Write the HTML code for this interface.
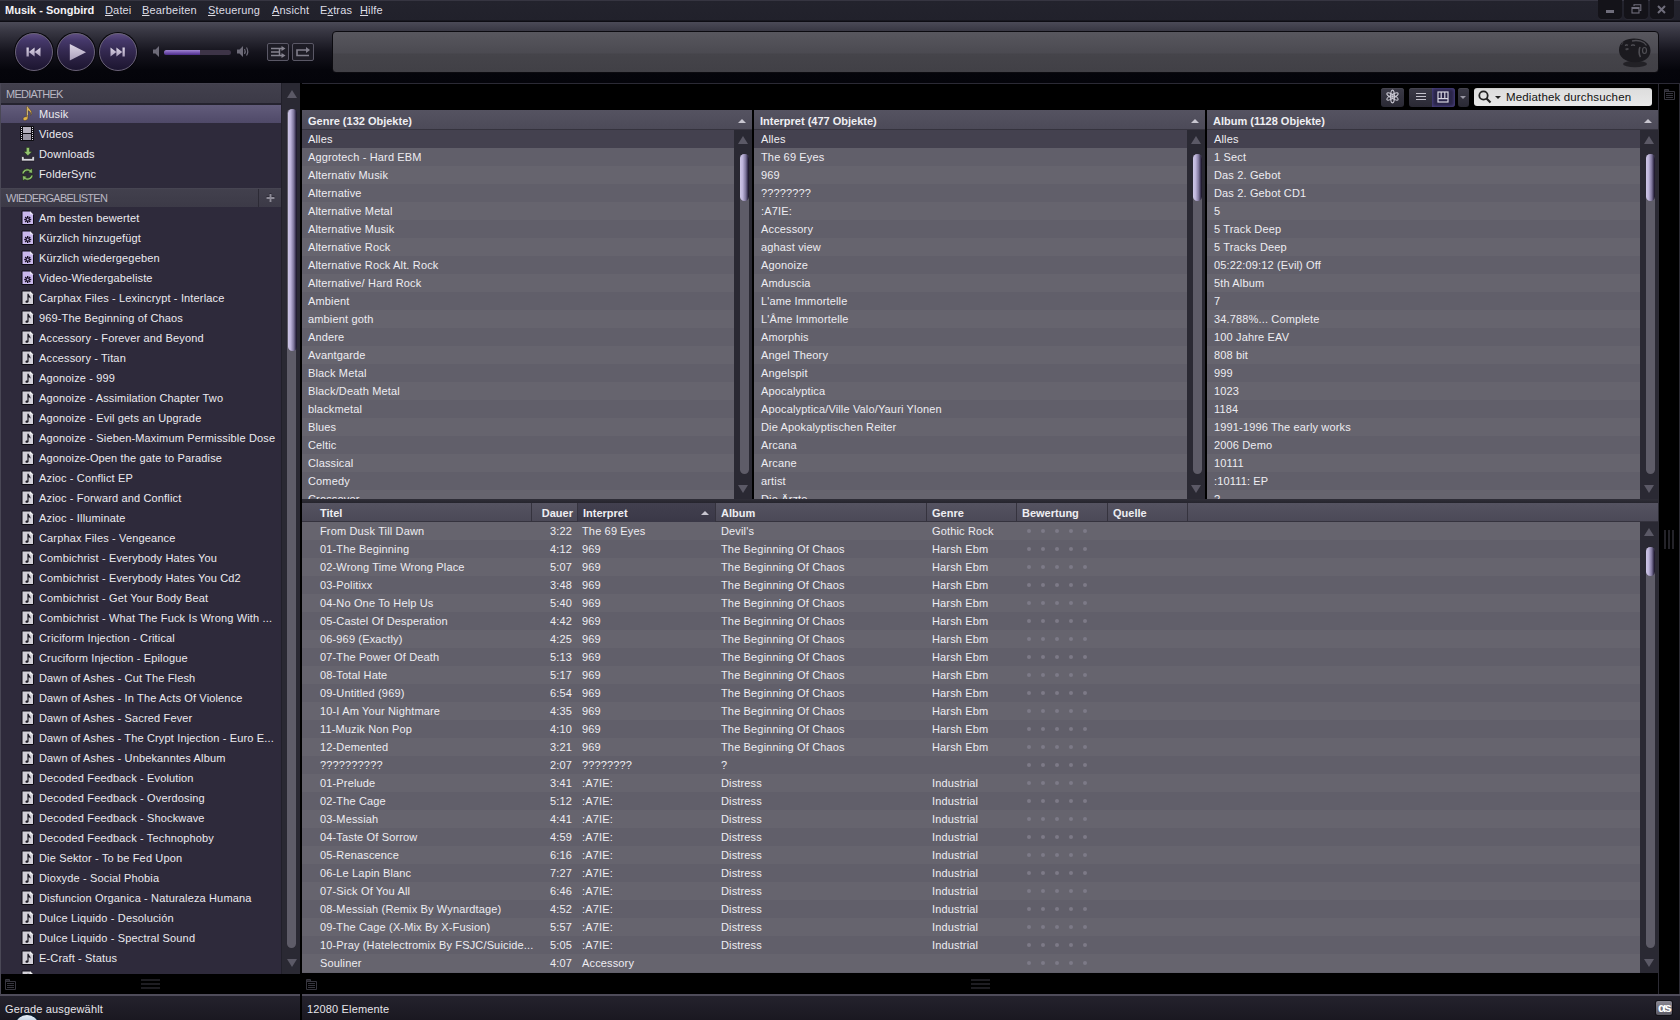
<!DOCTYPE html><html><head><meta charset="utf-8"><style>
*{box-sizing:border-box}
html,body{margin:0;padding:0}
body{width:1680px;height:1020px;overflow:hidden;background:#000;position:relative;font-family:"Liberation Sans",sans-serif;font-size:11px;letter-spacing:0.15px;color:#eeeef2}
.a{position:absolute}
.t{position:absolute;white-space:nowrap;line-height:14px}
.ic{position:absolute}
#title{left:0;top:0;width:1680px;height:22px;background:linear-gradient(#363541 0,#363541 1px,#23232d 1px,#21212b 20px,#0e0d14 21px)}
#toolbar{left:0;top:22px;width:1680px;height:61px;background:linear-gradient(#4b4a57 0,#3a3945 8px,#15141d 30px,#05050b 48px,#04040a 61px)}
.menu span{text-decoration:underline}
.btn{position:absolute;border-radius:50%;width:38px;height:38px;top:33px;background:linear-gradient(#5e4d82 0,#45386a 18%,#352a52 45%,#271e3e 75%,#1c1530 100%);border:1px solid #6a6279;box-shadow:0 0 0 1px #08070c}
#display{left:332px;top:31px;width:1327px;height:42px;border:1px solid #0c0b10;border-radius:4px;background:linear-gradient(#58575e 0,#4b4a51 21px,#45444a 22px,#414046 100%)}
#sidebar{left:0;top:83px;width:281px;height:891px;background:#2e2a3b;border-left:1px solid #3f3c4a;overflow:hidden}
.shdr{position:absolute;left:0;width:280px;height:20px;background:linear-gradient(#4b4957 0,#42404d 1px,#3c3a47 100%);color:#b9b7c3;font-size:11.5px}
.srow{position:absolute;left:0;width:280px;height:20px}
.srow .t{left:38px;top:4px;color:#ecebf0}
.vscroll{position:absolute;background:#2a2933;border-left:1px solid #21202a}
.arr{position:absolute;width:0;height:0;border-left:5px solid transparent;border-right:5px solid transparent}
.up{border-bottom:8px solid #5b5966}
.dn{border-top:8px solid #5b5966}
.groove{position:absolute;background:#5e5c68;border-radius:5px}
.thumb{position:absolute;border-radius:5px;background:linear-gradient(90deg,#cdc6e6 0,#bdb4da 30%,#7a7298 65%,#2e2844 88%,#17121f 100%)}
.pane{position:absolute;top:110px;height:389px;background:#5f5d69;overflow:hidden}
.phdr{position:absolute;left:0;top:0;height:20px;background:linear-gradient(#555361 0,#4c4a58 100%);border-bottom:1px solid #35333e;font-weight:bold;font-size:11px;letter-spacing:0}
.prow{position:absolute;left:0;height:18px}
.prow .t{top:2px;left:7px;color:#eeedf2}
.sortarr{position:absolute;width:0;height:0;border-left:4px solid transparent;border-right:4px solid transparent;border-bottom:4px solid #c8c6d0}
#tl{left:302px;top:503px;width:1356px;height:470px;background:#62606b;overflow:hidden}
.th{position:absolute;top:0;height:19px;border-right:1px solid #35333e;font-weight:bold;font-size:11px;letter-spacing:0}
.trow{position:absolute;left:0;width:1338px;height:18px}
.trow .t{top:2px;color:#eeedf2}
.dot{position:absolute;width:4px;height:4px;border-radius:2px;background:#7d7a87}
</style></head><body>

<div id="title" class="a"></div>
<div class="t" style="left:5px;top:3px;font-weight:bold;font-size:11px;letter-spacing:0;color:#f4f2f6">Musik - Songbird</div>
<div class="t menu" style="left:105px;top:3px;color:#dddce4"><span>D</span>atei</div>
<div class="t menu" style="left:142px;top:3px;color:#dddce4"><span>B</span>earbeiten</div>
<div class="t menu" style="left:208px;top:3px;color:#dddce4"><span>S</span>teuerung</div>
<div class="t menu" style="left:272px;top:3px;color:#dddce4"><span>A</span>nsicht</div>
<div class="t menu" style="left:320px;top:3px;color:#dddce4">E<span>x</span>tras</div>
<div class="t menu" style="left:360px;top:3px;color:#dddce4"><span>H</span>ilfe</div>
<div class="a" style="left:1598px;top:0;width:24px;height:19px;background:#141319;border-radius:0 0 4px 4px;box-shadow:0 1px 0 #2a2933"></div>
<div class="a" style="left:1624px;top:0;width:24px;height:19px;background:#141319;border-radius:0 0 4px 4px;box-shadow:0 1px 0 #2a2933"></div>
<div class="a" style="left:1650px;top:0;width:24px;height:19px;background:#141319;border-radius:0 0 4px 4px;box-shadow:0 1px 0 #2a2933"></div>
<div class="a" style="left:1606px;top:10px;width:8px;height:3px;background:#6f6d7b"></div>
<svg class="a" style="left:1631px;top:4px" width="11" height="10" viewBox="0 0 11 10"><path d="M3 2 V0.8 H9.8 V6.5 H8.5" stroke="#6f6d7b" stroke-width="1.1" fill="none"/><rect x="1" y="3.5" width="7" height="5.5" fill="none" stroke="#6f6d7b" stroke-width="1.1"/><rect x="1" y="3" width="7" height="2" fill="#6f6d7b"/></svg>
<svg class="a" style="left:1657px;top:5px" width="9" height="9" viewBox="0 0 9 9"><path d="M1 1 L8 8 M8 1 L1 8" stroke="#6f6d7b" stroke-width="2"/></svg>
<div id="toolbar" class="a"></div>
<div class="btn" style="left:15px"></div>
<div class="btn" style="left:57px"></div>
<div class="btn" style="left:99px"></div>
<svg class="a" style="left:26px;top:47px" width="16" height="10" viewBox="0 0 16 10"><defs><linearGradient id="ig" x1="0" y1="0" x2="0" y2="1"><stop offset="0" stop-color="#ddd6e6"/><stop offset="1" stop-color="#a99dba"/></linearGradient></defs><rect x="0.5" y="0.5" width="2.3" height="9" fill="url(#ig)"/><path d="M8.6 0.5 V9.5 L2.8 5 Z M14.5 0.5 V9.5 L8.6 5 Z" fill="url(#ig)"/></svg>
<svg class="a" style="left:69px;top:44px" width="18" height="17" viewBox="0 0 18 17"><path d="M0.8 0 L17 8.3 L0.8 16.6 Z" fill="url(#ig)"/></svg>
<svg class="a" style="left:110px;top:47px" width="16" height="10" viewBox="0 0 16 10"><path d="M0.5 0.5 V9.5 L6.4 5 Z M6.4 0.5 V9.5 L12.3 5 Z" fill="url(#ig)"/><rect x="12.5" y="0.5" width="2.3" height="9" fill="url(#ig)"/></svg>
<svg class="a" style="left:153px;top:46px" width="7" height="11" viewBox="0 0 7 11"><path d="M0 3.5 H2.5 L6 0 V11 L2.5 7.5 H0 Z" fill="#6d6b78"/></svg>
<div class="a" style="left:164px;top:50px;width:67px;height:5px;border-radius:3px;background:#3d3447"></div>
<div class="a" style="left:164px;top:50px;width:36px;height:5px;border-radius:3px 0 0 3px;background:linear-gradient(#a086cf 0,#7a5ab6 45%,#4a2b86 100%)"></div>
<svg class="a" style="left:237px;top:46px" width="13" height="11" viewBox="0 0 13 11"><path d="M0 3.5 H2.5 L6 0 V11 L2.5 7.5 H0 Z" fill="#6d6b78"/><path d="M7.5 3 Q9 5.5 7.5 8 M9.5 1.5 Q12 5.5 9.5 9.5" stroke="#6d6b78" stroke-width="1.2" fill="none"/></svg>
<div class="a" style="left:267px;top:43px;width:22px;height:18px;border:1px solid #5a5866;border-radius:2px;background:#1d1c25"></div>
<div class="a" style="left:292px;top:43px;width:22px;height:18px;border:1px solid #5a5866;border-radius:2px;background:#1d1c25"></div>
<svg class="a" style="left:270px;top:46px" width="16" height="12" viewBox="0 0 16 12"><path d="M1 2.5 H12 M1 6 H10 M1 9.5 H12 M9.5 2.5 V9.5" stroke="#85838f" stroke-width="1.5" fill="none"/><path d="M11.5 0 L15.5 2.5 L11.5 5 Z M11.5 7 L15.5 9.5 L11.5 12 Z" fill="#85838f"/></svg>
<svg class="a" style="left:295px;top:47px" width="16" height="11" viewBox="0 0 16 11"><path d="M14 8.5 H2 V3 H11" stroke="#807e8b" stroke-width="1.6" fill="none"/><path d="M11 0 L15 3 L11 6 Z" fill="#807e8b"/></svg>
<div id="display" class="a"></div>
<svg class="a" style="left:1618px;top:38px" width="34" height="31" viewBox="0 0 34 31"><ellipse cx="17" cy="26" rx="12" ry="3.2" fill="#222126"/><path d="M1 12 C1 4 8 0.5 16 0.5 C25 0.5 32.5 5 32.5 12.5 C32.5 18 29 22 23 23.5 C17 25 9 24 5 20.5 C2 18 1 15 1 12 Z" fill="#1b1a1f"/><path d="M14 3 C20 1.5 26 3.5 28.5 7.5" stroke="#4d4c52" stroke-width="1.3" fill="none"/><path d="M22 9 C20.5 12 21 17 22.5 19" stroke="#4f4e54" stroke-width="1.6" fill="none"/><ellipse cx="26.5" cy="12.5" rx="2" ry="3" fill="none" stroke="#4f4e54" stroke-width="1.2"/><path d="M7 7.5 Q8.5 6.3 10 7.3 M13 7.5 Q15 6.3 17 7.5" stroke="#56555b" stroke-width="1.1" fill="none"/><path d="M7.5 10.5 Q10 9.5 11 11 Q9.5 13 7.5 12 Z" fill="#47464c"/><path d="M5 4 L3.5 7" stroke="#3c3b41" stroke-width="1"/></svg>
<div class="a" style="left:0;top:83px;width:1680px;height:1px;background:#2b2a35"></div>
<div id="sidebar" class="a">
<div class="shdr" style="top:0"><div class="t" style="left:5px;top:4px;font-size:11px;letter-spacing:-0.75px">MEDIATHEK</div></div>
<div class="a" style="left:0;top:20px;width:280px;height:2px;background:#25232f"></div>
<div class="srow" style="top:22px;height:18px;background:linear-gradient(#625c7b,#4f4968)"></div>
<div class="srow" style="top:20px"><svg class="ic" style="left:21px;top:3px" width="11" height="15" viewBox="0 0 11 15"><path d="M4.6 0.6 L5.9 0.6 C6.6 2.8 9.6 4 9.7 7.2 C9.7 8.3 9.2 9 8.6 9.4 C8.9 8.6 9 7.8 8.6 6.8 C8 5.6 6.8 5 5.9 4.6 L5.9 12 C5.9 13.6 4.2 14.7 2.6 14.5 C1.4 14.3 0.9 13.5 1.1 12.6 C1.4 11.3 3.2 10.4 4.6 10.8 Z" fill="#e2b548" stroke="#3a2c1c" stroke-width="0.4"/><path d="M5 1 L5.5 1 L5.5 9" stroke="#f3dfa0" stroke-width="0.6"/></svg><div class="t">Musik</div></div>
<div class="srow" style="top:40px"><svg class="ic" style="left:19px;top:3px" width="14" height="15" viewBox="0 0 14 15"><rect x="0" y="0" width="14" height="15" rx="1" fill="#0e0d12"/><rect x="3" y="1" width="8" height="6" fill="#b4b1bd"/><rect x="3" y="8" width="8" height="6" fill="#9a97a4"/><g fill="#e4e2ea"><rect x="1" y="1" width="1" height="1"/><rect x="1" y="3" width="1" height="1"/><rect x="1" y="5" width="1" height="1"/><rect x="1" y="7" width="1" height="1"/><rect x="1" y="9" width="1" height="1"/><rect x="1" y="11" width="1" height="1"/><rect x="1" y="13" width="1" height="1"/><rect x="12" y="1" width="1" height="1"/><rect x="12" y="3" width="1" height="1"/><rect x="12" y="5" width="1" height="1"/><rect x="12" y="7" width="1" height="1"/><rect x="12" y="9" width="1" height="1"/><rect x="12" y="11" width="1" height="1"/><rect x="12" y="13" width="1" height="1"/></g></svg><div class="t">Videos</div></div>
<div class="srow" style="top:60px"><svg class="ic" style="left:20px;top:4px" width="14" height="15" viewBox="0 0 14 15"><path d="M5.3 0.5 H8.5 V4.5 H11 L6.9 8.8 L2.8 4.5 H5.3 Z" fill="#93c46f" stroke="#1d2a14" stroke-width="0.5"/><path d="M0.5 9.5 H3 V11.5 H11 V9.5 H13.5 V14 H0.5 Z" fill="#d6d4dc" stroke="#141218" stroke-width="0.6"/></svg><div class="t">Downloads</div></div>
<div class="srow" style="top:80px"><svg class="ic" style="left:19px;top:4px" width="15" height="15" viewBox="0 0 15 15"><path d="M2 7 C2 3 6.5 0.5 10.3 2.6 L12 1.2 L12.6 6.3 L7.8 5.6 L9.3 4.4 C6.8 3.2 4.2 4.6 4 7 Z" fill="#8cc06a" stroke="#172012" stroke-width="0.6"/><path d="M13 8 C13 12 8.5 14.5 4.7 12.4 L3 13.8 L2.4 8.7 L7.2 9.4 L5.7 10.6 C8.2 11.8 10.8 10.4 11 8 Z" fill="#8cc06a" stroke="#172012" stroke-width="0.6"/></svg><div class="t">FolderSync</div></div>
<div class="shdr" style="top:105px;height:19px"><div class="t" style="left:5px;top:3px;font-size:11px;letter-spacing:-0.75px">WIEDERGABELISTEN</div><div class="a" style="left:257px;top:1px;width:1px;height:18px;background:#2c2a35"></div><svg class="a" style="left:265px;top:5px" width="9" height="10" viewBox="0 0 9 10"><path d="M4.5 1 V9 M0.5 5 H8.5" stroke="#1a1822" stroke-width="2" transform="translate(0,-0.6)"/><path d="M4.5 1 V9 M0.5 5 H8.5" stroke="#8d8b97" stroke-width="2"/></svg></div>
<div class="srow" style="top:124px"><svg class="ic" style="left:20px;top:3px" width="14" height="16" viewBox="0 0 14 16"><path d="M1 1 H9 L12.5 4.5 V14.5 H1 Z" fill="#c9b8ec" stroke="#0d0b14" stroke-width="1"/><path d="M9 1 L12.5 4.5 H9 Z" fill="#ece6fa"/><g stroke="#1a1228" stroke-width="1.4"><line x1="6.7" y1="6" x2="6.7" y2="13"/><line x1="3.2" y1="9.5" x2="10.2" y2="9.5"/><line x1="4.2" y1="7" x2="9.2" y2="12"/><line x1="9.2" y1="7" x2="4.2" y2="12"/></g><circle cx="6.7" cy="9.5" r="1" fill="#c9b8ec"/></svg><div class="t">Am besten bewertet</div></div>
<div class="srow" style="top:144px"><svg class="ic" style="left:20px;top:3px" width="14" height="16" viewBox="0 0 14 16"><path d="M1 1 H9 L12.5 4.5 V14.5 H1 Z" fill="#c9b8ec" stroke="#0d0b14" stroke-width="1"/><path d="M9 1 L12.5 4.5 H9 Z" fill="#ece6fa"/><g stroke="#1a1228" stroke-width="1.4"><line x1="6.7" y1="6" x2="6.7" y2="13"/><line x1="3.2" y1="9.5" x2="10.2" y2="9.5"/><line x1="4.2" y1="7" x2="9.2" y2="12"/><line x1="9.2" y1="7" x2="4.2" y2="12"/></g><circle cx="6.7" cy="9.5" r="1" fill="#c9b8ec"/></svg><div class="t">Kürzlich hinzugefügt</div></div>
<div class="srow" style="top:164px"><svg class="ic" style="left:20px;top:3px" width="14" height="16" viewBox="0 0 14 16"><path d="M1 1 H9 L12.5 4.5 V14.5 H1 Z" fill="#c9b8ec" stroke="#0d0b14" stroke-width="1"/><path d="M9 1 L12.5 4.5 H9 Z" fill="#ece6fa"/><g stroke="#1a1228" stroke-width="1.4"><line x1="6.7" y1="6" x2="6.7" y2="13"/><line x1="3.2" y1="9.5" x2="10.2" y2="9.5"/><line x1="4.2" y1="7" x2="9.2" y2="12"/><line x1="9.2" y1="7" x2="4.2" y2="12"/></g><circle cx="6.7" cy="9.5" r="1" fill="#c9b8ec"/></svg><div class="t">Kürzlich wiedergegeben</div></div>
<div class="srow" style="top:184px"><svg class="ic" style="left:20px;top:3px" width="14" height="16" viewBox="0 0 14 16"><path d="M1 1 H9 L12.5 4.5 V14.5 H1 Z" fill="#c9b8ec" stroke="#0d0b14" stroke-width="1"/><path d="M9 1 L12.5 4.5 H9 Z" fill="#ece6fa"/><g stroke="#1a1228" stroke-width="1.4"><line x1="6.7" y1="6" x2="6.7" y2="13"/><line x1="3.2" y1="9.5" x2="10.2" y2="9.5"/><line x1="4.2" y1="7" x2="9.2" y2="12"/><line x1="9.2" y1="7" x2="4.2" y2="12"/></g><circle cx="6.7" cy="9.5" r="1" fill="#c9b8ec"/></svg><div class="t">Video-Wiedergabeliste</div></div>
<div class="srow" style="top:204px"><svg class="ic" style="left:20px;top:3px" width="14" height="16" viewBox="0 0 14 16"><path d="M1 1 H9 L12.5 4.5 V14.5 H1 Z" fill="#d2d0d8" stroke="#0d0b14" stroke-width="1"/><path d="M9 1 L12.5 4.5 H9 Z" fill="#f2f2f4"/><path d="M6.4 3.8 H7.6 C7.8 5.8 10 6.2 9.6 8.8 C9.2 7.8 8.4 7.3 7.6 7.2 V11.5 C7.6 12.9 4.6 13.3 4.4 12 C4.3 11.1 5.4 10.3 6.4 10.7 Z" fill="#1e1c26"/></svg><div class="t">Carphax Files - Lexincrypt - Interlace</div></div>
<div class="srow" style="top:224px"><svg class="ic" style="left:20px;top:3px" width="14" height="16" viewBox="0 0 14 16"><path d="M1 1 H9 L12.5 4.5 V14.5 H1 Z" fill="#d2d0d8" stroke="#0d0b14" stroke-width="1"/><path d="M9 1 L12.5 4.5 H9 Z" fill="#f2f2f4"/><path d="M6.4 3.8 H7.6 C7.8 5.8 10 6.2 9.6 8.8 C9.2 7.8 8.4 7.3 7.6 7.2 V11.5 C7.6 12.9 4.6 13.3 4.4 12 C4.3 11.1 5.4 10.3 6.4 10.7 Z" fill="#1e1c26"/></svg><div class="t">969-The Beginning of Chaos</div></div>
<div class="srow" style="top:244px"><svg class="ic" style="left:20px;top:3px" width="14" height="16" viewBox="0 0 14 16"><path d="M1 1 H9 L12.5 4.5 V14.5 H1 Z" fill="#d2d0d8" stroke="#0d0b14" stroke-width="1"/><path d="M9 1 L12.5 4.5 H9 Z" fill="#f2f2f4"/><path d="M6.4 3.8 H7.6 C7.8 5.8 10 6.2 9.6 8.8 C9.2 7.8 8.4 7.3 7.6 7.2 V11.5 C7.6 12.9 4.6 13.3 4.4 12 C4.3 11.1 5.4 10.3 6.4 10.7 Z" fill="#1e1c26"/></svg><div class="t">Accessory - Forever and Beyond</div></div>
<div class="srow" style="top:264px"><svg class="ic" style="left:20px;top:3px" width="14" height="16" viewBox="0 0 14 16"><path d="M1 1 H9 L12.5 4.5 V14.5 H1 Z" fill="#d2d0d8" stroke="#0d0b14" stroke-width="1"/><path d="M9 1 L12.5 4.5 H9 Z" fill="#f2f2f4"/><path d="M6.4 3.8 H7.6 C7.8 5.8 10 6.2 9.6 8.8 C9.2 7.8 8.4 7.3 7.6 7.2 V11.5 C7.6 12.9 4.6 13.3 4.4 12 C4.3 11.1 5.4 10.3 6.4 10.7 Z" fill="#1e1c26"/></svg><div class="t">Accessory - Titan</div></div>
<div class="srow" style="top:284px"><svg class="ic" style="left:20px;top:3px" width="14" height="16" viewBox="0 0 14 16"><path d="M1 1 H9 L12.5 4.5 V14.5 H1 Z" fill="#d2d0d8" stroke="#0d0b14" stroke-width="1"/><path d="M9 1 L12.5 4.5 H9 Z" fill="#f2f2f4"/><path d="M6.4 3.8 H7.6 C7.8 5.8 10 6.2 9.6 8.8 C9.2 7.8 8.4 7.3 7.6 7.2 V11.5 C7.6 12.9 4.6 13.3 4.4 12 C4.3 11.1 5.4 10.3 6.4 10.7 Z" fill="#1e1c26"/></svg><div class="t">Agonoize - 999</div></div>
<div class="srow" style="top:304px"><svg class="ic" style="left:20px;top:3px" width="14" height="16" viewBox="0 0 14 16"><path d="M1 1 H9 L12.5 4.5 V14.5 H1 Z" fill="#d2d0d8" stroke="#0d0b14" stroke-width="1"/><path d="M9 1 L12.5 4.5 H9 Z" fill="#f2f2f4"/><path d="M6.4 3.8 H7.6 C7.8 5.8 10 6.2 9.6 8.8 C9.2 7.8 8.4 7.3 7.6 7.2 V11.5 C7.6 12.9 4.6 13.3 4.4 12 C4.3 11.1 5.4 10.3 6.4 10.7 Z" fill="#1e1c26"/></svg><div class="t">Agonoize - Assimilation Chapter Two</div></div>
<div class="srow" style="top:324px"><svg class="ic" style="left:20px;top:3px" width="14" height="16" viewBox="0 0 14 16"><path d="M1 1 H9 L12.5 4.5 V14.5 H1 Z" fill="#d2d0d8" stroke="#0d0b14" stroke-width="1"/><path d="M9 1 L12.5 4.5 H9 Z" fill="#f2f2f4"/><path d="M6.4 3.8 H7.6 C7.8 5.8 10 6.2 9.6 8.8 C9.2 7.8 8.4 7.3 7.6 7.2 V11.5 C7.6 12.9 4.6 13.3 4.4 12 C4.3 11.1 5.4 10.3 6.4 10.7 Z" fill="#1e1c26"/></svg><div class="t">Agonoize - Evil gets an Upgrade</div></div>
<div class="srow" style="top:344px"><svg class="ic" style="left:20px;top:3px" width="14" height="16" viewBox="0 0 14 16"><path d="M1 1 H9 L12.5 4.5 V14.5 H1 Z" fill="#d2d0d8" stroke="#0d0b14" stroke-width="1"/><path d="M9 1 L12.5 4.5 H9 Z" fill="#f2f2f4"/><path d="M6.4 3.8 H7.6 C7.8 5.8 10 6.2 9.6 8.8 C9.2 7.8 8.4 7.3 7.6 7.2 V11.5 C7.6 12.9 4.6 13.3 4.4 12 C4.3 11.1 5.4 10.3 6.4 10.7 Z" fill="#1e1c26"/></svg><div class="t">Agonoize - Sieben-Maximum Permissible Dose</div></div>
<div class="srow" style="top:364px"><svg class="ic" style="left:20px;top:3px" width="14" height="16" viewBox="0 0 14 16"><path d="M1 1 H9 L12.5 4.5 V14.5 H1 Z" fill="#d2d0d8" stroke="#0d0b14" stroke-width="1"/><path d="M9 1 L12.5 4.5 H9 Z" fill="#f2f2f4"/><path d="M6.4 3.8 H7.6 C7.8 5.8 10 6.2 9.6 8.8 C9.2 7.8 8.4 7.3 7.6 7.2 V11.5 C7.6 12.9 4.6 13.3 4.4 12 C4.3 11.1 5.4 10.3 6.4 10.7 Z" fill="#1e1c26"/></svg><div class="t">Agonoize-Open the gate to Paradise</div></div>
<div class="srow" style="top:384px"><svg class="ic" style="left:20px;top:3px" width="14" height="16" viewBox="0 0 14 16"><path d="M1 1 H9 L12.5 4.5 V14.5 H1 Z" fill="#d2d0d8" stroke="#0d0b14" stroke-width="1"/><path d="M9 1 L12.5 4.5 H9 Z" fill="#f2f2f4"/><path d="M6.4 3.8 H7.6 C7.8 5.8 10 6.2 9.6 8.8 C9.2 7.8 8.4 7.3 7.6 7.2 V11.5 C7.6 12.9 4.6 13.3 4.4 12 C4.3 11.1 5.4 10.3 6.4 10.7 Z" fill="#1e1c26"/></svg><div class="t">Azioc - Conflict EP</div></div>
<div class="srow" style="top:404px"><svg class="ic" style="left:20px;top:3px" width="14" height="16" viewBox="0 0 14 16"><path d="M1 1 H9 L12.5 4.5 V14.5 H1 Z" fill="#d2d0d8" stroke="#0d0b14" stroke-width="1"/><path d="M9 1 L12.5 4.5 H9 Z" fill="#f2f2f4"/><path d="M6.4 3.8 H7.6 C7.8 5.8 10 6.2 9.6 8.8 C9.2 7.8 8.4 7.3 7.6 7.2 V11.5 C7.6 12.9 4.6 13.3 4.4 12 C4.3 11.1 5.4 10.3 6.4 10.7 Z" fill="#1e1c26"/></svg><div class="t">Azioc - Forward and Conflict</div></div>
<div class="srow" style="top:424px"><svg class="ic" style="left:20px;top:3px" width="14" height="16" viewBox="0 0 14 16"><path d="M1 1 H9 L12.5 4.5 V14.5 H1 Z" fill="#d2d0d8" stroke="#0d0b14" stroke-width="1"/><path d="M9 1 L12.5 4.5 H9 Z" fill="#f2f2f4"/><path d="M6.4 3.8 H7.6 C7.8 5.8 10 6.2 9.6 8.8 C9.2 7.8 8.4 7.3 7.6 7.2 V11.5 C7.6 12.9 4.6 13.3 4.4 12 C4.3 11.1 5.4 10.3 6.4 10.7 Z" fill="#1e1c26"/></svg><div class="t">Azioc - Illuminate</div></div>
<div class="srow" style="top:444px"><svg class="ic" style="left:20px;top:3px" width="14" height="16" viewBox="0 0 14 16"><path d="M1 1 H9 L12.5 4.5 V14.5 H1 Z" fill="#d2d0d8" stroke="#0d0b14" stroke-width="1"/><path d="M9 1 L12.5 4.5 H9 Z" fill="#f2f2f4"/><path d="M6.4 3.8 H7.6 C7.8 5.8 10 6.2 9.6 8.8 C9.2 7.8 8.4 7.3 7.6 7.2 V11.5 C7.6 12.9 4.6 13.3 4.4 12 C4.3 11.1 5.4 10.3 6.4 10.7 Z" fill="#1e1c26"/></svg><div class="t">Carphax Files - Vengeance</div></div>
<div class="srow" style="top:464px"><svg class="ic" style="left:20px;top:3px" width="14" height="16" viewBox="0 0 14 16"><path d="M1 1 H9 L12.5 4.5 V14.5 H1 Z" fill="#d2d0d8" stroke="#0d0b14" stroke-width="1"/><path d="M9 1 L12.5 4.5 H9 Z" fill="#f2f2f4"/><path d="M6.4 3.8 H7.6 C7.8 5.8 10 6.2 9.6 8.8 C9.2 7.8 8.4 7.3 7.6 7.2 V11.5 C7.6 12.9 4.6 13.3 4.4 12 C4.3 11.1 5.4 10.3 6.4 10.7 Z" fill="#1e1c26"/></svg><div class="t">Combichrist - Everybody Hates You</div></div>
<div class="srow" style="top:484px"><svg class="ic" style="left:20px;top:3px" width="14" height="16" viewBox="0 0 14 16"><path d="M1 1 H9 L12.5 4.5 V14.5 H1 Z" fill="#d2d0d8" stroke="#0d0b14" stroke-width="1"/><path d="M9 1 L12.5 4.5 H9 Z" fill="#f2f2f4"/><path d="M6.4 3.8 H7.6 C7.8 5.8 10 6.2 9.6 8.8 C9.2 7.8 8.4 7.3 7.6 7.2 V11.5 C7.6 12.9 4.6 13.3 4.4 12 C4.3 11.1 5.4 10.3 6.4 10.7 Z" fill="#1e1c26"/></svg><div class="t">Combichrist - Everybody Hates You Cd2</div></div>
<div class="srow" style="top:504px"><svg class="ic" style="left:20px;top:3px" width="14" height="16" viewBox="0 0 14 16"><path d="M1 1 H9 L12.5 4.5 V14.5 H1 Z" fill="#d2d0d8" stroke="#0d0b14" stroke-width="1"/><path d="M9 1 L12.5 4.5 H9 Z" fill="#f2f2f4"/><path d="M6.4 3.8 H7.6 C7.8 5.8 10 6.2 9.6 8.8 C9.2 7.8 8.4 7.3 7.6 7.2 V11.5 C7.6 12.9 4.6 13.3 4.4 12 C4.3 11.1 5.4 10.3 6.4 10.7 Z" fill="#1e1c26"/></svg><div class="t">Combichrist - Get Your Body Beat</div></div>
<div class="srow" style="top:524px"><svg class="ic" style="left:20px;top:3px" width="14" height="16" viewBox="0 0 14 16"><path d="M1 1 H9 L12.5 4.5 V14.5 H1 Z" fill="#d2d0d8" stroke="#0d0b14" stroke-width="1"/><path d="M9 1 L12.5 4.5 H9 Z" fill="#f2f2f4"/><path d="M6.4 3.8 H7.6 C7.8 5.8 10 6.2 9.6 8.8 C9.2 7.8 8.4 7.3 7.6 7.2 V11.5 C7.6 12.9 4.6 13.3 4.4 12 C4.3 11.1 5.4 10.3 6.4 10.7 Z" fill="#1e1c26"/></svg><div class="t">Combichrist - What The Fuck Is Wrong With ...</div></div>
<div class="srow" style="top:544px"><svg class="ic" style="left:20px;top:3px" width="14" height="16" viewBox="0 0 14 16"><path d="M1 1 H9 L12.5 4.5 V14.5 H1 Z" fill="#d2d0d8" stroke="#0d0b14" stroke-width="1"/><path d="M9 1 L12.5 4.5 H9 Z" fill="#f2f2f4"/><path d="M6.4 3.8 H7.6 C7.8 5.8 10 6.2 9.6 8.8 C9.2 7.8 8.4 7.3 7.6 7.2 V11.5 C7.6 12.9 4.6 13.3 4.4 12 C4.3 11.1 5.4 10.3 6.4 10.7 Z" fill="#1e1c26"/></svg><div class="t">Criciform Injection - Critical</div></div>
<div class="srow" style="top:564px"><svg class="ic" style="left:20px;top:3px" width="14" height="16" viewBox="0 0 14 16"><path d="M1 1 H9 L12.5 4.5 V14.5 H1 Z" fill="#d2d0d8" stroke="#0d0b14" stroke-width="1"/><path d="M9 1 L12.5 4.5 H9 Z" fill="#f2f2f4"/><path d="M6.4 3.8 H7.6 C7.8 5.8 10 6.2 9.6 8.8 C9.2 7.8 8.4 7.3 7.6 7.2 V11.5 C7.6 12.9 4.6 13.3 4.4 12 C4.3 11.1 5.4 10.3 6.4 10.7 Z" fill="#1e1c26"/></svg><div class="t">Cruciform Injection - Epilogue</div></div>
<div class="srow" style="top:584px"><svg class="ic" style="left:20px;top:3px" width="14" height="16" viewBox="0 0 14 16"><path d="M1 1 H9 L12.5 4.5 V14.5 H1 Z" fill="#d2d0d8" stroke="#0d0b14" stroke-width="1"/><path d="M9 1 L12.5 4.5 H9 Z" fill="#f2f2f4"/><path d="M6.4 3.8 H7.6 C7.8 5.8 10 6.2 9.6 8.8 C9.2 7.8 8.4 7.3 7.6 7.2 V11.5 C7.6 12.9 4.6 13.3 4.4 12 C4.3 11.1 5.4 10.3 6.4 10.7 Z" fill="#1e1c26"/></svg><div class="t">Dawn of Ashes - Cut The Flesh</div></div>
<div class="srow" style="top:604px"><svg class="ic" style="left:20px;top:3px" width="14" height="16" viewBox="0 0 14 16"><path d="M1 1 H9 L12.5 4.5 V14.5 H1 Z" fill="#d2d0d8" stroke="#0d0b14" stroke-width="1"/><path d="M9 1 L12.5 4.5 H9 Z" fill="#f2f2f4"/><path d="M6.4 3.8 H7.6 C7.8 5.8 10 6.2 9.6 8.8 C9.2 7.8 8.4 7.3 7.6 7.2 V11.5 C7.6 12.9 4.6 13.3 4.4 12 C4.3 11.1 5.4 10.3 6.4 10.7 Z" fill="#1e1c26"/></svg><div class="t">Dawn of Ashes - In The Acts Of Violence</div></div>
<div class="srow" style="top:624px"><svg class="ic" style="left:20px;top:3px" width="14" height="16" viewBox="0 0 14 16"><path d="M1 1 H9 L12.5 4.5 V14.5 H1 Z" fill="#d2d0d8" stroke="#0d0b14" stroke-width="1"/><path d="M9 1 L12.5 4.5 H9 Z" fill="#f2f2f4"/><path d="M6.4 3.8 H7.6 C7.8 5.8 10 6.2 9.6 8.8 C9.2 7.8 8.4 7.3 7.6 7.2 V11.5 C7.6 12.9 4.6 13.3 4.4 12 C4.3 11.1 5.4 10.3 6.4 10.7 Z" fill="#1e1c26"/></svg><div class="t">Dawn of Ashes - Sacred Fever</div></div>
<div class="srow" style="top:644px"><svg class="ic" style="left:20px;top:3px" width="14" height="16" viewBox="0 0 14 16"><path d="M1 1 H9 L12.5 4.5 V14.5 H1 Z" fill="#d2d0d8" stroke="#0d0b14" stroke-width="1"/><path d="M9 1 L12.5 4.5 H9 Z" fill="#f2f2f4"/><path d="M6.4 3.8 H7.6 C7.8 5.8 10 6.2 9.6 8.8 C9.2 7.8 8.4 7.3 7.6 7.2 V11.5 C7.6 12.9 4.6 13.3 4.4 12 C4.3 11.1 5.4 10.3 6.4 10.7 Z" fill="#1e1c26"/></svg><div class="t">Dawn of Ashes - The Crypt Injection - Euro E...</div></div>
<div class="srow" style="top:664px"><svg class="ic" style="left:20px;top:3px" width="14" height="16" viewBox="0 0 14 16"><path d="M1 1 H9 L12.5 4.5 V14.5 H1 Z" fill="#d2d0d8" stroke="#0d0b14" stroke-width="1"/><path d="M9 1 L12.5 4.5 H9 Z" fill="#f2f2f4"/><path d="M6.4 3.8 H7.6 C7.8 5.8 10 6.2 9.6 8.8 C9.2 7.8 8.4 7.3 7.6 7.2 V11.5 C7.6 12.9 4.6 13.3 4.4 12 C4.3 11.1 5.4 10.3 6.4 10.7 Z" fill="#1e1c26"/></svg><div class="t">Dawn of Ashes - Unbekanntes Album</div></div>
<div class="srow" style="top:684px"><svg class="ic" style="left:20px;top:3px" width="14" height="16" viewBox="0 0 14 16"><path d="M1 1 H9 L12.5 4.5 V14.5 H1 Z" fill="#d2d0d8" stroke="#0d0b14" stroke-width="1"/><path d="M9 1 L12.5 4.5 H9 Z" fill="#f2f2f4"/><path d="M6.4 3.8 H7.6 C7.8 5.8 10 6.2 9.6 8.8 C9.2 7.8 8.4 7.3 7.6 7.2 V11.5 C7.6 12.9 4.6 13.3 4.4 12 C4.3 11.1 5.4 10.3 6.4 10.7 Z" fill="#1e1c26"/></svg><div class="t">Decoded Feedback - Evolution</div></div>
<div class="srow" style="top:704px"><svg class="ic" style="left:20px;top:3px" width="14" height="16" viewBox="0 0 14 16"><path d="M1 1 H9 L12.5 4.5 V14.5 H1 Z" fill="#d2d0d8" stroke="#0d0b14" stroke-width="1"/><path d="M9 1 L12.5 4.5 H9 Z" fill="#f2f2f4"/><path d="M6.4 3.8 H7.6 C7.8 5.8 10 6.2 9.6 8.8 C9.2 7.8 8.4 7.3 7.6 7.2 V11.5 C7.6 12.9 4.6 13.3 4.4 12 C4.3 11.1 5.4 10.3 6.4 10.7 Z" fill="#1e1c26"/></svg><div class="t">Decoded Feedback - Overdosing</div></div>
<div class="srow" style="top:724px"><svg class="ic" style="left:20px;top:3px" width="14" height="16" viewBox="0 0 14 16"><path d="M1 1 H9 L12.5 4.5 V14.5 H1 Z" fill="#d2d0d8" stroke="#0d0b14" stroke-width="1"/><path d="M9 1 L12.5 4.5 H9 Z" fill="#f2f2f4"/><path d="M6.4 3.8 H7.6 C7.8 5.8 10 6.2 9.6 8.8 C9.2 7.8 8.4 7.3 7.6 7.2 V11.5 C7.6 12.9 4.6 13.3 4.4 12 C4.3 11.1 5.4 10.3 6.4 10.7 Z" fill="#1e1c26"/></svg><div class="t">Decoded Feedback - Shockwave</div></div>
<div class="srow" style="top:744px"><svg class="ic" style="left:20px;top:3px" width="14" height="16" viewBox="0 0 14 16"><path d="M1 1 H9 L12.5 4.5 V14.5 H1 Z" fill="#d2d0d8" stroke="#0d0b14" stroke-width="1"/><path d="M9 1 L12.5 4.5 H9 Z" fill="#f2f2f4"/><path d="M6.4 3.8 H7.6 C7.8 5.8 10 6.2 9.6 8.8 C9.2 7.8 8.4 7.3 7.6 7.2 V11.5 C7.6 12.9 4.6 13.3 4.4 12 C4.3 11.1 5.4 10.3 6.4 10.7 Z" fill="#1e1c26"/></svg><div class="t">Decoded Feedback - Technophoby</div></div>
<div class="srow" style="top:764px"><svg class="ic" style="left:20px;top:3px" width="14" height="16" viewBox="0 0 14 16"><path d="M1 1 H9 L12.5 4.5 V14.5 H1 Z" fill="#d2d0d8" stroke="#0d0b14" stroke-width="1"/><path d="M9 1 L12.5 4.5 H9 Z" fill="#f2f2f4"/><path d="M6.4 3.8 H7.6 C7.8 5.8 10 6.2 9.6 8.8 C9.2 7.8 8.4 7.3 7.6 7.2 V11.5 C7.6 12.9 4.6 13.3 4.4 12 C4.3 11.1 5.4 10.3 6.4 10.7 Z" fill="#1e1c26"/></svg><div class="t">Die Sektor - To be Fed Upon</div></div>
<div class="srow" style="top:784px"><svg class="ic" style="left:20px;top:3px" width="14" height="16" viewBox="0 0 14 16"><path d="M1 1 H9 L12.5 4.5 V14.5 H1 Z" fill="#d2d0d8" stroke="#0d0b14" stroke-width="1"/><path d="M9 1 L12.5 4.5 H9 Z" fill="#f2f2f4"/><path d="M6.4 3.8 H7.6 C7.8 5.8 10 6.2 9.6 8.8 C9.2 7.8 8.4 7.3 7.6 7.2 V11.5 C7.6 12.9 4.6 13.3 4.4 12 C4.3 11.1 5.4 10.3 6.4 10.7 Z" fill="#1e1c26"/></svg><div class="t">Dioxyde - Social Phobia</div></div>
<div class="srow" style="top:804px"><svg class="ic" style="left:20px;top:3px" width="14" height="16" viewBox="0 0 14 16"><path d="M1 1 H9 L12.5 4.5 V14.5 H1 Z" fill="#d2d0d8" stroke="#0d0b14" stroke-width="1"/><path d="M9 1 L12.5 4.5 H9 Z" fill="#f2f2f4"/><path d="M6.4 3.8 H7.6 C7.8 5.8 10 6.2 9.6 8.8 C9.2 7.8 8.4 7.3 7.6 7.2 V11.5 C7.6 12.9 4.6 13.3 4.4 12 C4.3 11.1 5.4 10.3 6.4 10.7 Z" fill="#1e1c26"/></svg><div class="t">Disfuncion Organica - Naturaleza Humana</div></div>
<div class="srow" style="top:824px"><svg class="ic" style="left:20px;top:3px" width="14" height="16" viewBox="0 0 14 16"><path d="M1 1 H9 L12.5 4.5 V14.5 H1 Z" fill="#d2d0d8" stroke="#0d0b14" stroke-width="1"/><path d="M9 1 L12.5 4.5 H9 Z" fill="#f2f2f4"/><path d="M6.4 3.8 H7.6 C7.8 5.8 10 6.2 9.6 8.8 C9.2 7.8 8.4 7.3 7.6 7.2 V11.5 C7.6 12.9 4.6 13.3 4.4 12 C4.3 11.1 5.4 10.3 6.4 10.7 Z" fill="#1e1c26"/></svg><div class="t">Dulce Liquido - Desolución</div></div>
<div class="srow" style="top:844px"><svg class="ic" style="left:20px;top:3px" width="14" height="16" viewBox="0 0 14 16"><path d="M1 1 H9 L12.5 4.5 V14.5 H1 Z" fill="#d2d0d8" stroke="#0d0b14" stroke-width="1"/><path d="M9 1 L12.5 4.5 H9 Z" fill="#f2f2f4"/><path d="M6.4 3.8 H7.6 C7.8 5.8 10 6.2 9.6 8.8 C9.2 7.8 8.4 7.3 7.6 7.2 V11.5 C7.6 12.9 4.6 13.3 4.4 12 C4.3 11.1 5.4 10.3 6.4 10.7 Z" fill="#1e1c26"/></svg><div class="t">Dulce Liquido - Spectral Sound</div></div>
<div class="srow" style="top:864px"><svg class="ic" style="left:20px;top:3px" width="14" height="16" viewBox="0 0 14 16"><path d="M1 1 H9 L12.5 4.5 V14.5 H1 Z" fill="#d2d0d8" stroke="#0d0b14" stroke-width="1"/><path d="M9 1 L12.5 4.5 H9 Z" fill="#f2f2f4"/><path d="M6.4 3.8 H7.6 C7.8 5.8 10 6.2 9.6 8.8 C9.2 7.8 8.4 7.3 7.6 7.2 V11.5 C7.6 12.9 4.6 13.3 4.4 12 C4.3 11.1 5.4 10.3 6.4 10.7 Z" fill="#1e1c26"/></svg><div class="t">E-Craft - Status</div></div>
<div class="srow" style="top:884px"><svg class="ic" style="left:20px;top:3px" width="14" height="16" viewBox="0 0 14 16"><path d="M1 1 H9 L12.5 4.5 V14.5 H1 Z" fill="#d2d0d8" stroke="#0d0b14" stroke-width="1"/><path d="M9 1 L12.5 4.5 H9 Z" fill="#f2f2f4"/><path d="M6.4 3.8 H7.6 C7.8 5.8 10 6.2 9.6 8.8 C9.2 7.8 8.4 7.3 7.6 7.2 V11.5 C7.6 12.9 4.6 13.3 4.4 12 C4.3 11.1 5.4 10.3 6.4 10.7 Z" fill="#1e1c26"/></svg><div class="t"></div></div>
</div>
<div class="vscroll" style="left:281px;top:83px;width:20px;height:891px"></div>
<div class="arr up" style="left:287px;top:90px"></div>
<div class="groove" style="left:287px;top:109px;width:9px;height:839px"></div>
<div class="thumb" style="left:288px;top:109px;width:9px;height:242px"></div>
<div class="arr dn" style="left:287px;top:959px"></div>
<div class="a" style="left:1381px;top:88px;width:23px;height:19px;border-radius:3px;background:linear-gradient(#3b3a47,#2a2934);box-shadow:inset 0 1px 0 #45444f"></div>
<svg class="a" style="left:1385px;top:89px" width="15" height="15" viewBox="0 0 15 15"><g fill="none" stroke="#d0ced8" stroke-width="1.1"><ellipse cx="7.5" cy="7.5" rx="1.9" ry="6.4"/><ellipse cx="7.5" cy="7.5" rx="1.9" ry="6.4" transform="rotate(60 7.5 7.5)"/><ellipse cx="7.5" cy="7.5" rx="1.9" ry="6.4" transform="rotate(120 7.5 7.5)"/></g><circle cx="7.5" cy="7.5" r="1.2" fill="#d0ced8"/></svg>
<div class="a" style="left:1409px;top:88px;width:23px;height:19px;border-radius:3px 0 0 3px;background:linear-gradient(#3b3a47,#2a2934);box-shadow:inset 0 1px 0 #45444f"></div>
<div class="a" style="left:1432px;top:88px;width:23px;height:19px;border-radius:0 3px 3px 0;background:#2a2548;box-shadow:inset 0 0 3px 1px #4a4180"></div>
<svg class="a" style="left:1415px;top:92px" width="12" height="10" viewBox="0 0 12 10"><path d="M1 1.5 H11 M1 4.5 H11 M1 7.5 H11" stroke="#c4c2cc" stroke-width="1.1"/></svg>
<svg class="a" style="left:1437px;top:91px" width="12" height="12" viewBox="0 0 12 12"><rect x="1" y="1" width="10" height="10" fill="none" stroke="#d8d6e2" stroke-width="1.2"/><path d="M4.2 1 V7.6 M7.8 1 V7.6 M1 7.6 H11" stroke="#d8d6e2" stroke-width="1.2"/></svg>
<div class="a" style="left:1458px;top:88px;width:11px;height:19px;border-radius:3px;background:linear-gradient(#3b3a47,#2a2934);box-shadow:inset 0 1px 0 #45444f"></div>
<div class="a" style="left:1460px;top:96px;width:0;height:0;border-left:3px solid transparent;border-right:3px solid transparent;border-top:3px solid #9a98a5"></div>
<div class="a" style="left:1474px;top:88px;width:178px;height:18px;border-radius:3px;background:linear-gradient(#c9c9c9 0,#dedede 2px,#e8e8e8 100%)"></div>
<svg class="a" style="left:1478px;top:90px" width="14" height="14" viewBox="0 0 14 14"><circle cx="5.5" cy="5.5" r="4.2" fill="none" stroke="#222" stroke-width="1.8"/><path d="M8.5 8.5 L12.5 12.5" stroke="#222" stroke-width="2.2"/></svg>
<div class="a" style="left:1495px;top:96px;width:0;height:0;border-left:3px solid transparent;border-right:3px solid transparent;border-top:3px solid #222"></div>
<div class="t" style="left:1506px;top:90px;color:#111;font-size:11.5px">Mediathek durchsuchen</div>
<div class="pane" style="left:302px;width:450px">
<div class="phdr" style="width:450px"><div class="t" style="left:6px;top:4px">Genre (132 Objekte)</div><div class="sortarr" style="left:436px;top:9px"></div></div>
<div class="prow" style="top:20px;width:432px;background:#44414f"><div class="t" style="left:6px">Alles</div></div>
<div class="prow" style="top:38px;width:432px;background:#615f6a"><div class="t" style="left:6px">Aggrotech - Hard EBM</div></div>
<div class="prow" style="top:56px;width:432px;background:#66646e"><div class="t" style="left:6px">Alternativ Musik</div></div>
<div class="prow" style="top:74px;width:432px;background:#615f6a"><div class="t" style="left:6px">Alternative</div></div>
<div class="prow" style="top:92px;width:432px;background:#66646e"><div class="t" style="left:6px">Alternative Metal</div></div>
<div class="prow" style="top:110px;width:432px;background:#615f6a"><div class="t" style="left:6px">Alternative Musik</div></div>
<div class="prow" style="top:128px;width:432px;background:#66646e"><div class="t" style="left:6px">Alternative Rock</div></div>
<div class="prow" style="top:146px;width:432px;background:#615f6a"><div class="t" style="left:6px">Alternative Rock Alt. Rock</div></div>
<div class="prow" style="top:164px;width:432px;background:#66646e"><div class="t" style="left:6px">Alternative/ Hard Rock</div></div>
<div class="prow" style="top:182px;width:432px;background:#615f6a"><div class="t" style="left:6px">Ambient</div></div>
<div class="prow" style="top:200px;width:432px;background:#66646e"><div class="t" style="left:6px">ambient goth</div></div>
<div class="prow" style="top:218px;width:432px;background:#615f6a"><div class="t" style="left:6px">Andere</div></div>
<div class="prow" style="top:236px;width:432px;background:#66646e"><div class="t" style="left:6px">Avantgarde</div></div>
<div class="prow" style="top:254px;width:432px;background:#615f6a"><div class="t" style="left:6px">Black Metal</div></div>
<div class="prow" style="top:272px;width:432px;background:#66646e"><div class="t" style="left:6px">Black/Death Metal</div></div>
<div class="prow" style="top:290px;width:432px;background:#615f6a"><div class="t" style="left:6px">blackmetal</div></div>
<div class="prow" style="top:308px;width:432px;background:#66646e"><div class="t" style="left:6px">Blues</div></div>
<div class="prow" style="top:326px;width:432px;background:#615f6a"><div class="t" style="left:6px">Celtic</div></div>
<div class="prow" style="top:344px;width:432px;background:#66646e"><div class="t" style="left:6px">Classical</div></div>
<div class="prow" style="top:362px;width:432px;background:#615f6a"><div class="t" style="left:6px">Comedy</div></div>
<div class="prow" style="top:380px;width:432px;background:#66646e"><div class="t" style="left:6px">Crossover</div></div>
<div class="vscroll" style="left:432px;top:20px;width:18px;height:369px;border-left:none"></div>
<div class="arr up" style="left:436px;top:26px"></div>
<div class="groove" style="left:438px;top:44px;width:9px;height:320px"></div>
<div class="thumb" style="left:438px;top:44px;width:9px;height:47px"></div>
<div class="arr dn" style="left:436px;top:375px"></div>
</div>
<div class="pane" style="left:754px;width:451px">
<div class="phdr" style="width:451px"><div class="t" style="left:6px;top:4px">Interpret (477 Objekte)</div><div class="sortarr" style="left:437px;top:9px"></div></div>
<div class="prow" style="top:20px;width:433px;background:#44414f"><div class="t" style="left:7px">Alles</div></div>
<div class="prow" style="top:38px;width:433px;background:#615f6a"><div class="t" style="left:7px">The 69 Eyes</div></div>
<div class="prow" style="top:56px;width:433px;background:#66646e"><div class="t" style="left:7px">969</div></div>
<div class="prow" style="top:74px;width:433px;background:#615f6a"><div class="t" style="left:7px">????????</div></div>
<div class="prow" style="top:92px;width:433px;background:#66646e"><div class="t" style="left:7px">:A7IE:</div></div>
<div class="prow" style="top:110px;width:433px;background:#615f6a"><div class="t" style="left:7px">Accessory</div></div>
<div class="prow" style="top:128px;width:433px;background:#66646e"><div class="t" style="left:7px">aghast view</div></div>
<div class="prow" style="top:146px;width:433px;background:#615f6a"><div class="t" style="left:7px">Agonoize</div></div>
<div class="prow" style="top:164px;width:433px;background:#66646e"><div class="t" style="left:7px">Amduscia</div></div>
<div class="prow" style="top:182px;width:433px;background:#615f6a"><div class="t" style="left:7px">L&#x27;ame Immortelle</div></div>
<div class="prow" style="top:200px;width:433px;background:#66646e"><div class="t" style="left:7px">L&#x27;Âme Immortelle</div></div>
<div class="prow" style="top:218px;width:433px;background:#615f6a"><div class="t" style="left:7px">Amorphis</div></div>
<div class="prow" style="top:236px;width:433px;background:#66646e"><div class="t" style="left:7px">Angel Theory</div></div>
<div class="prow" style="top:254px;width:433px;background:#615f6a"><div class="t" style="left:7px">Angelspit</div></div>
<div class="prow" style="top:272px;width:433px;background:#66646e"><div class="t" style="left:7px">Apocalyptica</div></div>
<div class="prow" style="top:290px;width:433px;background:#615f6a"><div class="t" style="left:7px">Apocalyptica/Ville Valo/Yauri Ylonen</div></div>
<div class="prow" style="top:308px;width:433px;background:#66646e"><div class="t" style="left:7px">Die Apokalyptischen Reiter</div></div>
<div class="prow" style="top:326px;width:433px;background:#615f6a"><div class="t" style="left:7px">Arcana</div></div>
<div class="prow" style="top:344px;width:433px;background:#66646e"><div class="t" style="left:7px">Arcane</div></div>
<div class="prow" style="top:362px;width:433px;background:#615f6a"><div class="t" style="left:7px">artist</div></div>
<div class="prow" style="top:380px;width:433px;background:#66646e"><div class="t" style="left:7px">Die Ärzte</div></div>
<div class="vscroll" style="left:433px;top:20px;width:18px;height:369px;border-left:none"></div>
<div class="arr up" style="left:437px;top:26px"></div>
<div class="groove" style="left:439px;top:44px;width:9px;height:320px"></div>
<div class="thumb" style="left:439px;top:44px;width:9px;height:47px"></div>
<div class="arr dn" style="left:437px;top:375px"></div>
</div>
<div class="pane" style="left:1207px;width:451px">
<div class="phdr" style="width:451px"><div class="t" style="left:6px;top:4px">Album (1128 Objekte)</div><div class="sortarr" style="left:437px;top:9px"></div></div>
<div class="prow" style="top:20px;width:433px;background:#44414f"><div class="t" style="left:7px">Alles</div></div>
<div class="prow" style="top:38px;width:433px;background:#615f6a"><div class="t" style="left:7px">1 Sect</div></div>
<div class="prow" style="top:56px;width:433px;background:#66646e"><div class="t" style="left:7px">Das 2. Gebot</div></div>
<div class="prow" style="top:74px;width:433px;background:#615f6a"><div class="t" style="left:7px">Das 2. Gebot CD1</div></div>
<div class="prow" style="top:92px;width:433px;background:#66646e"><div class="t" style="left:7px">5</div></div>
<div class="prow" style="top:110px;width:433px;background:#615f6a"><div class="t" style="left:7px">5 Track Deep</div></div>
<div class="prow" style="top:128px;width:433px;background:#66646e"><div class="t" style="left:7px">5 Tracks Deep</div></div>
<div class="prow" style="top:146px;width:433px;background:#615f6a"><div class="t" style="left:7px">05:22:09:12 (Evil) Off</div></div>
<div class="prow" style="top:164px;width:433px;background:#66646e"><div class="t" style="left:7px">5th Album</div></div>
<div class="prow" style="top:182px;width:433px;background:#615f6a"><div class="t" style="left:7px">7</div></div>
<div class="prow" style="top:200px;width:433px;background:#66646e"><div class="t" style="left:7px">34.788%... Complete</div></div>
<div class="prow" style="top:218px;width:433px;background:#615f6a"><div class="t" style="left:7px">100 Jahre EAV</div></div>
<div class="prow" style="top:236px;width:433px;background:#66646e"><div class="t" style="left:7px">808 bit</div></div>
<div class="prow" style="top:254px;width:433px;background:#615f6a"><div class="t" style="left:7px">999</div></div>
<div class="prow" style="top:272px;width:433px;background:#66646e"><div class="t" style="left:7px">1023</div></div>
<div class="prow" style="top:290px;width:433px;background:#615f6a"><div class="t" style="left:7px">1184</div></div>
<div class="prow" style="top:308px;width:433px;background:#66646e"><div class="t" style="left:7px">1991-1996 The early works</div></div>
<div class="prow" style="top:326px;width:433px;background:#615f6a"><div class="t" style="left:7px">2006 Demo</div></div>
<div class="prow" style="top:344px;width:433px;background:#66646e"><div class="t" style="left:7px">10111</div></div>
<div class="prow" style="top:362px;width:433px;background:#615f6a"><div class="t" style="left:7px">:10111: EP</div></div>
<div class="prow" style="top:380px;width:433px;background:#66646e"><div class="t" style="left:7px">?</div></div>
<div class="vscroll" style="left:433px;top:20px;width:18px;height:369px;border-left:none"></div>
<div class="arr up" style="left:437px;top:26px"></div>
<div class="groove" style="left:439px;top:44px;width:9px;height:320px"></div>
<div class="thumb" style="left:439px;top:44px;width:9px;height:47px"></div>
<div class="arr dn" style="left:437px;top:375px"></div>
</div>
<div class="a" style="left:302px;top:499px;width:1356px;height:4px;background:linear-gradient(#2f2e38,#25242d)"></div>
<div id="tl" class="a">
<div class="a" style="left:0;top:0;width:1356px;height:19px;background:linear-gradient(#555361,#4b4957);border-bottom:1px solid #35333e"></div>
<div class="th" style="left:0px;width:230px;"><div class="t" style="left:18px;top:3px">Titel</div></div>
<div class="th" style="left:230px;width:46px;"><div class="t" style="right:4px;top:3px">Dauer</div></div>
<div class="th" style="left:276px;width:138px;background:linear-gradient(#42404f,#3a3847);"><div class="t" style="left:5px;top:3px">Interpret</div><div class="sortarr" style="left:123px;top:8px"></div></div>
<div class="th" style="left:414px;width:211px;"><div class="t" style="left:5px;top:3px">Album</div></div>
<div class="th" style="left:625px;width:90px;"><div class="t" style="left:5px;top:3px">Genre</div></div>
<div class="th" style="left:715px;width:91px;"><div class="t" style="left:5px;top:3px">Bewertung</div></div>
<div class="th" style="left:806px;width:80px;"><div class="t" style="left:5px;top:3px">Quelle</div></div>
<div class="trow" style="top:19px;background:#66646e">
<div class="t" style="left:18px">From Dusk Till Dawn</div>
<div class="t" style="left:230px;width:40px;text-align:right">3:22</div>
<div class="t" style="left:280px">The 69 Eyes</div>
<div class="t" style="left:419px">Devil&#x27;s</div>
<div class="t" style="left:630px">Gothic Rock</div>
<div class="dot" style="left:725px;top:7px"></div>
<div class="dot" style="left:739px;top:7px"></div>
<div class="dot" style="left:753px;top:7px"></div>
<div class="dot" style="left:767px;top:7px"></div>
<div class="dot" style="left:781px;top:7px"></div>
</div>
<div class="trow" style="top:37px;background:#615f6a">
<div class="t" style="left:18px">01-The Beginning</div>
<div class="t" style="left:230px;width:40px;text-align:right">4:12</div>
<div class="t" style="left:280px">969</div>
<div class="t" style="left:419px">The Beginning Of Chaos</div>
<div class="t" style="left:630px">Harsh Ebm</div>
<div class="dot" style="left:725px;top:7px"></div>
<div class="dot" style="left:739px;top:7px"></div>
<div class="dot" style="left:753px;top:7px"></div>
<div class="dot" style="left:767px;top:7px"></div>
<div class="dot" style="left:781px;top:7px"></div>
</div>
<div class="trow" style="top:55px;background:#66646e">
<div class="t" style="left:18px">02-Wrong Time Wrong Place</div>
<div class="t" style="left:230px;width:40px;text-align:right">5:07</div>
<div class="t" style="left:280px">969</div>
<div class="t" style="left:419px">The Beginning Of Chaos</div>
<div class="t" style="left:630px">Harsh Ebm</div>
<div class="dot" style="left:725px;top:7px"></div>
<div class="dot" style="left:739px;top:7px"></div>
<div class="dot" style="left:753px;top:7px"></div>
<div class="dot" style="left:767px;top:7px"></div>
<div class="dot" style="left:781px;top:7px"></div>
</div>
<div class="trow" style="top:73px;background:#615f6a">
<div class="t" style="left:18px">03-Politixx</div>
<div class="t" style="left:230px;width:40px;text-align:right">3:48</div>
<div class="t" style="left:280px">969</div>
<div class="t" style="left:419px">The Beginning Of Chaos</div>
<div class="t" style="left:630px">Harsh Ebm</div>
<div class="dot" style="left:725px;top:7px"></div>
<div class="dot" style="left:739px;top:7px"></div>
<div class="dot" style="left:753px;top:7px"></div>
<div class="dot" style="left:767px;top:7px"></div>
<div class="dot" style="left:781px;top:7px"></div>
</div>
<div class="trow" style="top:91px;background:#66646e">
<div class="t" style="left:18px">04-No One To Help Us</div>
<div class="t" style="left:230px;width:40px;text-align:right">5:40</div>
<div class="t" style="left:280px">969</div>
<div class="t" style="left:419px">The Beginning Of Chaos</div>
<div class="t" style="left:630px">Harsh Ebm</div>
<div class="dot" style="left:725px;top:7px"></div>
<div class="dot" style="left:739px;top:7px"></div>
<div class="dot" style="left:753px;top:7px"></div>
<div class="dot" style="left:767px;top:7px"></div>
<div class="dot" style="left:781px;top:7px"></div>
</div>
<div class="trow" style="top:109px;background:#615f6a">
<div class="t" style="left:18px">05-Castel Of Desperation</div>
<div class="t" style="left:230px;width:40px;text-align:right">4:42</div>
<div class="t" style="left:280px">969</div>
<div class="t" style="left:419px">The Beginning Of Chaos</div>
<div class="t" style="left:630px">Harsh Ebm</div>
<div class="dot" style="left:725px;top:7px"></div>
<div class="dot" style="left:739px;top:7px"></div>
<div class="dot" style="left:753px;top:7px"></div>
<div class="dot" style="left:767px;top:7px"></div>
<div class="dot" style="left:781px;top:7px"></div>
</div>
<div class="trow" style="top:127px;background:#66646e">
<div class="t" style="left:18px">06-969 (Exactly)</div>
<div class="t" style="left:230px;width:40px;text-align:right">4:25</div>
<div class="t" style="left:280px">969</div>
<div class="t" style="left:419px">The Beginning Of Chaos</div>
<div class="t" style="left:630px">Harsh Ebm</div>
<div class="dot" style="left:725px;top:7px"></div>
<div class="dot" style="left:739px;top:7px"></div>
<div class="dot" style="left:753px;top:7px"></div>
<div class="dot" style="left:767px;top:7px"></div>
<div class="dot" style="left:781px;top:7px"></div>
</div>
<div class="trow" style="top:145px;background:#615f6a">
<div class="t" style="left:18px">07-The Power Of Death</div>
<div class="t" style="left:230px;width:40px;text-align:right">5:13</div>
<div class="t" style="left:280px">969</div>
<div class="t" style="left:419px">The Beginning Of Chaos</div>
<div class="t" style="left:630px">Harsh Ebm</div>
<div class="dot" style="left:725px;top:7px"></div>
<div class="dot" style="left:739px;top:7px"></div>
<div class="dot" style="left:753px;top:7px"></div>
<div class="dot" style="left:767px;top:7px"></div>
<div class="dot" style="left:781px;top:7px"></div>
</div>
<div class="trow" style="top:163px;background:#66646e">
<div class="t" style="left:18px">08-Total Hate</div>
<div class="t" style="left:230px;width:40px;text-align:right">5:17</div>
<div class="t" style="left:280px">969</div>
<div class="t" style="left:419px">The Beginning Of Chaos</div>
<div class="t" style="left:630px">Harsh Ebm</div>
<div class="dot" style="left:725px;top:7px"></div>
<div class="dot" style="left:739px;top:7px"></div>
<div class="dot" style="left:753px;top:7px"></div>
<div class="dot" style="left:767px;top:7px"></div>
<div class="dot" style="left:781px;top:7px"></div>
</div>
<div class="trow" style="top:181px;background:#615f6a">
<div class="t" style="left:18px">09-Untitled (969)</div>
<div class="t" style="left:230px;width:40px;text-align:right">6:54</div>
<div class="t" style="left:280px">969</div>
<div class="t" style="left:419px">The Beginning Of Chaos</div>
<div class="t" style="left:630px">Harsh Ebm</div>
<div class="dot" style="left:725px;top:7px"></div>
<div class="dot" style="left:739px;top:7px"></div>
<div class="dot" style="left:753px;top:7px"></div>
<div class="dot" style="left:767px;top:7px"></div>
<div class="dot" style="left:781px;top:7px"></div>
</div>
<div class="trow" style="top:199px;background:#66646e">
<div class="t" style="left:18px">10-I Am Your Nightmare</div>
<div class="t" style="left:230px;width:40px;text-align:right">4:35</div>
<div class="t" style="left:280px">969</div>
<div class="t" style="left:419px">The Beginning Of Chaos</div>
<div class="t" style="left:630px">Harsh Ebm</div>
<div class="dot" style="left:725px;top:7px"></div>
<div class="dot" style="left:739px;top:7px"></div>
<div class="dot" style="left:753px;top:7px"></div>
<div class="dot" style="left:767px;top:7px"></div>
<div class="dot" style="left:781px;top:7px"></div>
</div>
<div class="trow" style="top:217px;background:#615f6a">
<div class="t" style="left:18px">11-Muzik Non Pop</div>
<div class="t" style="left:230px;width:40px;text-align:right">4:10</div>
<div class="t" style="left:280px">969</div>
<div class="t" style="left:419px">The Beginning Of Chaos</div>
<div class="t" style="left:630px">Harsh Ebm</div>
<div class="dot" style="left:725px;top:7px"></div>
<div class="dot" style="left:739px;top:7px"></div>
<div class="dot" style="left:753px;top:7px"></div>
<div class="dot" style="left:767px;top:7px"></div>
<div class="dot" style="left:781px;top:7px"></div>
</div>
<div class="trow" style="top:235px;background:#66646e">
<div class="t" style="left:18px">12-Demented</div>
<div class="t" style="left:230px;width:40px;text-align:right">3:21</div>
<div class="t" style="left:280px">969</div>
<div class="t" style="left:419px">The Beginning Of Chaos</div>
<div class="t" style="left:630px">Harsh Ebm</div>
<div class="dot" style="left:725px;top:7px"></div>
<div class="dot" style="left:739px;top:7px"></div>
<div class="dot" style="left:753px;top:7px"></div>
<div class="dot" style="left:767px;top:7px"></div>
<div class="dot" style="left:781px;top:7px"></div>
</div>
<div class="trow" style="top:253px;background:#615f6a">
<div class="t" style="left:18px">??????????</div>
<div class="t" style="left:230px;width:40px;text-align:right">2:07</div>
<div class="t" style="left:280px">????????</div>
<div class="t" style="left:419px">?</div>
<div class="t" style="left:630px"></div>
<div class="dot" style="left:725px;top:7px"></div>
<div class="dot" style="left:739px;top:7px"></div>
<div class="dot" style="left:753px;top:7px"></div>
<div class="dot" style="left:767px;top:7px"></div>
<div class="dot" style="left:781px;top:7px"></div>
</div>
<div class="trow" style="top:271px;background:#66646e">
<div class="t" style="left:18px">01-Prelude</div>
<div class="t" style="left:230px;width:40px;text-align:right">3:41</div>
<div class="t" style="left:280px">:A7IE:</div>
<div class="t" style="left:419px">Distress</div>
<div class="t" style="left:630px">Industrial</div>
<div class="dot" style="left:725px;top:7px"></div>
<div class="dot" style="left:739px;top:7px"></div>
<div class="dot" style="left:753px;top:7px"></div>
<div class="dot" style="left:767px;top:7px"></div>
<div class="dot" style="left:781px;top:7px"></div>
</div>
<div class="trow" style="top:289px;background:#615f6a">
<div class="t" style="left:18px">02-The Cage</div>
<div class="t" style="left:230px;width:40px;text-align:right">5:12</div>
<div class="t" style="left:280px">:A7IE:</div>
<div class="t" style="left:419px">Distress</div>
<div class="t" style="left:630px">Industrial</div>
<div class="dot" style="left:725px;top:7px"></div>
<div class="dot" style="left:739px;top:7px"></div>
<div class="dot" style="left:753px;top:7px"></div>
<div class="dot" style="left:767px;top:7px"></div>
<div class="dot" style="left:781px;top:7px"></div>
</div>
<div class="trow" style="top:307px;background:#66646e">
<div class="t" style="left:18px">03-Messiah</div>
<div class="t" style="left:230px;width:40px;text-align:right">4:41</div>
<div class="t" style="left:280px">:A7IE:</div>
<div class="t" style="left:419px">Distress</div>
<div class="t" style="left:630px">Industrial</div>
<div class="dot" style="left:725px;top:7px"></div>
<div class="dot" style="left:739px;top:7px"></div>
<div class="dot" style="left:753px;top:7px"></div>
<div class="dot" style="left:767px;top:7px"></div>
<div class="dot" style="left:781px;top:7px"></div>
</div>
<div class="trow" style="top:325px;background:#615f6a">
<div class="t" style="left:18px">04-Taste Of Sorrow</div>
<div class="t" style="left:230px;width:40px;text-align:right">4:59</div>
<div class="t" style="left:280px">:A7IE:</div>
<div class="t" style="left:419px">Distress</div>
<div class="t" style="left:630px">Industrial</div>
<div class="dot" style="left:725px;top:7px"></div>
<div class="dot" style="left:739px;top:7px"></div>
<div class="dot" style="left:753px;top:7px"></div>
<div class="dot" style="left:767px;top:7px"></div>
<div class="dot" style="left:781px;top:7px"></div>
</div>
<div class="trow" style="top:343px;background:#66646e">
<div class="t" style="left:18px">05-Renascence</div>
<div class="t" style="left:230px;width:40px;text-align:right">6:16</div>
<div class="t" style="left:280px">:A7IE:</div>
<div class="t" style="left:419px">Distress</div>
<div class="t" style="left:630px">Industrial</div>
<div class="dot" style="left:725px;top:7px"></div>
<div class="dot" style="left:739px;top:7px"></div>
<div class="dot" style="left:753px;top:7px"></div>
<div class="dot" style="left:767px;top:7px"></div>
<div class="dot" style="left:781px;top:7px"></div>
</div>
<div class="trow" style="top:361px;background:#615f6a">
<div class="t" style="left:18px">06-Le Lapin Blanc</div>
<div class="t" style="left:230px;width:40px;text-align:right">7:27</div>
<div class="t" style="left:280px">:A7IE:</div>
<div class="t" style="left:419px">Distress</div>
<div class="t" style="left:630px">Industrial</div>
<div class="dot" style="left:725px;top:7px"></div>
<div class="dot" style="left:739px;top:7px"></div>
<div class="dot" style="left:753px;top:7px"></div>
<div class="dot" style="left:767px;top:7px"></div>
<div class="dot" style="left:781px;top:7px"></div>
</div>
<div class="trow" style="top:379px;background:#66646e">
<div class="t" style="left:18px">07-Sick Of You All</div>
<div class="t" style="left:230px;width:40px;text-align:right">6:46</div>
<div class="t" style="left:280px">:A7IE:</div>
<div class="t" style="left:419px">Distress</div>
<div class="t" style="left:630px">Industrial</div>
<div class="dot" style="left:725px;top:7px"></div>
<div class="dot" style="left:739px;top:7px"></div>
<div class="dot" style="left:753px;top:7px"></div>
<div class="dot" style="left:767px;top:7px"></div>
<div class="dot" style="left:781px;top:7px"></div>
</div>
<div class="trow" style="top:397px;background:#615f6a">
<div class="t" style="left:18px">08-Messiah (Remix By Wynardtage)</div>
<div class="t" style="left:230px;width:40px;text-align:right">4:52</div>
<div class="t" style="left:280px">:A7IE:</div>
<div class="t" style="left:419px">Distress</div>
<div class="t" style="left:630px">Industrial</div>
<div class="dot" style="left:725px;top:7px"></div>
<div class="dot" style="left:739px;top:7px"></div>
<div class="dot" style="left:753px;top:7px"></div>
<div class="dot" style="left:767px;top:7px"></div>
<div class="dot" style="left:781px;top:7px"></div>
</div>
<div class="trow" style="top:415px;background:#66646e">
<div class="t" style="left:18px">09-The Cage (X-Mix By X-Fusion)</div>
<div class="t" style="left:230px;width:40px;text-align:right">5:57</div>
<div class="t" style="left:280px">:A7IE:</div>
<div class="t" style="left:419px">Distress</div>
<div class="t" style="left:630px">Industrial</div>
<div class="dot" style="left:725px;top:7px"></div>
<div class="dot" style="left:739px;top:7px"></div>
<div class="dot" style="left:753px;top:7px"></div>
<div class="dot" style="left:767px;top:7px"></div>
<div class="dot" style="left:781px;top:7px"></div>
</div>
<div class="trow" style="top:433px;background:#615f6a">
<div class="t" style="left:18px">10-Pray (Hatelectromix By FSJC/Suicide...</div>
<div class="t" style="left:230px;width:40px;text-align:right">5:05</div>
<div class="t" style="left:280px">:A7IE:</div>
<div class="t" style="left:419px">Distress</div>
<div class="t" style="left:630px">Industrial</div>
<div class="dot" style="left:725px;top:7px"></div>
<div class="dot" style="left:739px;top:7px"></div>
<div class="dot" style="left:753px;top:7px"></div>
<div class="dot" style="left:767px;top:7px"></div>
<div class="dot" style="left:781px;top:7px"></div>
</div>
<div class="trow" style="top:451px;background:#66646e">
<div class="t" style="left:18px">Souliner</div>
<div class="t" style="left:230px;width:40px;text-align:right">4:07</div>
<div class="t" style="left:280px">Accessory</div>
<div class="t" style="left:419px"></div>
<div class="t" style="left:630px"></div>
<div class="dot" style="left:725px;top:7px"></div>
<div class="dot" style="left:739px;top:7px"></div>
<div class="dot" style="left:753px;top:7px"></div>
<div class="dot" style="left:767px;top:7px"></div>
<div class="dot" style="left:781px;top:7px"></div>
</div>
<div class="vscroll" style="left:1338px;top:19px;width:18px;height:451px;border-left:none"></div>
<div class="arr up" style="left:1342px;top:25px"></div>
<div class="groove" style="left:1344px;top:44px;width:9px;height:401px"></div>
<div class="thumb" style="left:1344px;top:44px;width:9px;height:29px"></div>
<div class="arr dn" style="left:1342px;top:456px"></div>
</div>
<svg class="a" style="left:5px;top:979px" width="11" height="12" viewBox="0 0 11 12"><path d="M0.5 10.5 V0.5 H4.5 V2.5 H10.5 V10.5 Z" fill="none" stroke="#37363f"/><path d="M1 2.5 H10" stroke="#37363f"/><path d="M2 4.5 H9 M2 6.5 H9 M2 8.5 H9" stroke="#37363f"/><path d="M1 1.5 H4" stroke="#26252c"/></svg>
<svg class="a" style="left:141px;top:979px" width="19" height="10" viewBox="0 0 19 10"><path d="M0 1 H19 M0 5 H19 M0 9 H19" stroke="#3c3b45" stroke-width="1.2"/></svg>
<svg class="a" style="left:306px;top:979px" width="11" height="12" viewBox="0 0 11 12"><path d="M0.5 10.5 V0.5 H4.5 V2.5 H10.5 V10.5 Z" fill="none" stroke="#37363f"/><path d="M1 2.5 H10" stroke="#37363f"/><path d="M2 4.5 H9 M2 6.5 H9 M2 8.5 H9" stroke="#37363f"/><path d="M1 1.5 H4" stroke="#26252c"/></svg>
<svg class="a" style="left:971px;top:979px" width="19" height="10" viewBox="0 0 19 10"><path d="M0 1 H19 M0 5 H19 M0 9 H19" stroke="#3c3b45" stroke-width="1.2"/></svg>
<div class="a" style="left:1658px;top:83px;width:1px;height:912px;background:#2c2b34"></div>
<div class="a" style="left:1679px;top:83px;width:1px;height:912px;background:#2c2b34"></div>
<svg class="a" style="left:1664px;top:89px" width="11" height="12" viewBox="0 0 11 12"><path d="M0.5 10.5 V0.5 H4.5 V2.5 H10.5 V10.5 Z" fill="none" stroke="#37363f"/><path d="M1 2.5 H10" stroke="#37363f"/><path d="M2 4.5 H9 M2 6.5 H9 M2 8.5 H9" stroke="#37363f"/><path d="M1 1.5 H4" stroke="#26252c"/></svg>
<svg class="a" style="left:1664px;top:530px" width="10" height="19" viewBox="0 0 10 19"><path d="M1 0 V19 M5 0 V19 M9 0 V19" stroke="#3c3b45" stroke-width="1.2"/></svg>
<div class="a" style="left:0;top:994px;width:1680px;height:2px;background:#4f4c5a"></div>
<div class="a" style="left:0;top:996px;width:1680px;height:24px;background:linear-gradient(#24222d,#1a1821)"></div>
<div class="a" style="left:300px;top:83px;width:2px;height:937px;background:#000"></div>
<div class="t" style="left:5px;top:1002px;color:#e6e5ea">Gerade ausgewählt</div>
<div class="t" style="left:307px;top:1002px;color:#e6e5ea">12080 Elemente</div>
<div class="a" style="left:1656px;top:1001px;width:16px;height:14px;border-radius:2px;background:linear-gradient(#8a8893,#5e5c66);box-shadow:0 0 0 1px #111016"></div>
<div class="t" style="left:1658px;top:1000px;color:#fff;font-size:13px;font-weight:bold;letter-spacing:-1.6px;line-height:15px">&#945;s</div>
<div class="a" style="left:15px;top:1015px;width:24px;height:12px;border-radius:12px 12px 0 0;background:linear-gradient(#e6f0fa,#9fb4c8);box-shadow:0 -1px 0 1px #0b1a2a"></div>
<div class="a" style="left:0;top:83px;width:1px;height:912px;background:#4a4856"></div>
</body></html>
